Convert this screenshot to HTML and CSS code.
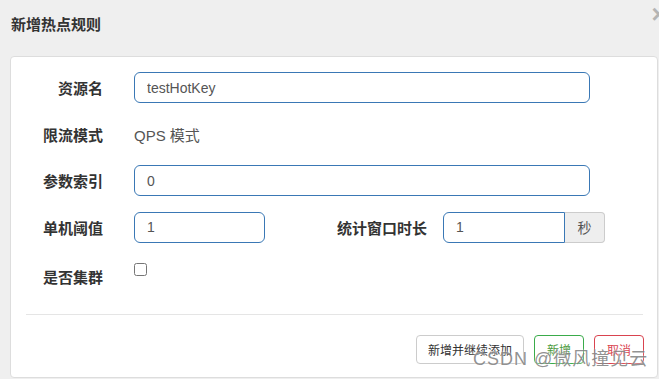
FILE: index.html
```html
<!doctype html>
<html lang="zh-CN">
<head>
  <meta charset="UTF-8">
  <title>新增热点规则</title>
  <link rel="stylesheet" href="styles.css">
</head>
<body>
  <div class="dialog">
    <div class="dialog-header">
      <h4>新增热点规则</h4>
      <span class="close">&times;</span>
    </div>
    <div class="panel">
      <form class="form">
        <div class="row">
          <label class="label">资源名</label>
          <input class="control wide" type="text" value="testHotKey">
        </div>
        <div class="row">
          <label class="label">限流模式</label>
          <span class="static">QPS 模式</span>
        </div>
        <div class="row">
          <label class="label">参数索引</label>
          <input class="control wide" type="text" value="0">
        </div>
        <div class="row">
          <label class="label">单机阈值</label>
          <input class="control short" type="text" value="1">
          <label class="label label-wide">统计窗口时长</label>
          <div class="group">
            <input class="control group-input" type="text" value="1">
            <span class="addon">秒</span>
          </div>
        </div>
        <div class="row row-check">
          <label class="label">是否集群</label>
          <input class="check" type="checkbox">
        </div>
      </form>
      <hr class="divider">
      <div class="actions">
        <button class="btn" type="button">新增并继续添加</button>
        <button class="btn btn-ok" type="button">新增</button>
        <button class="btn btn-cancel" type="button">取消</button>
      </div>
      <div class="watermark">CSDN @微风撞见云</div>
    </div>
  </div>
</body>
</html>
```

FILE: styles.css
```css
body {
  margin: 0;
  padding: 0;
  background-color: #efefef;
  font-family: "Liberation Sans", "Noto Sans CJK SC", sans-serif;
  color: #333;
  overflow: hidden;
}

.dialog {
  width: 659px;
  height: 379px;
}

.dialog-header {
  display: flex;
  justify-content: space-between;
  align-items: flex-start;
  height: 56px;
  padding-left: 11px;
}

.dialog-header h4 {
  margin: 0;
  padding-top: 14px;
  font-size: 15px;
  line-height: 21px;
  font-weight: bold;
  color: #333;
}

.close {
  margin-top: 3px;
  margin-right: -7px;
  font-size: 25px;
  line-height: 22px;
  font-weight: bold;
  color: #b4b4b4;
}

.panel {
  position: relative;
  margin: 0 1px 0 10px;
  padding: 15px 14px 13px 15px;
  height: 322px;
  box-sizing: border-box;
  background-color: #fff;
  border: 1px solid #ddd;
  border-radius: 4px;
}

.form {
  display: flex;
  flex-direction: column;
  gap: 15.5px;
}

.row {
  display: flex;
  align-items: center;
  height: 31px;
}

.label {
  width: 77px;
  margin-right: 31px;
  flex-shrink: 0;
  padding-top: 3px;
  text-align: right;
  font-size: 15px;
  line-height: 20px;
  font-weight: bold;
  color: #333;
}

.label-wide {
  width: 162px;
  margin-right: 16px;
}

.static {
  padding-top: 3px;
  font-size: 15px;
  line-height: 20px;
  color: #555;
}

.control {
  height: 31px;
  box-sizing: border-box;
  padding: 0 12px;
  border: 1px solid #3a78b5;
  border-radius: 6px;
  font-family: "Liberation Sans", "Noto Sans CJK SC", sans-serif;
  font-size: 14px;
  color: #555;
  background: #fff;
  outline: none;
}

.wide {
  width: 456px;
}

.short {
  width: 131px;
}

.group {
  display: flex;
  height: 31px;
}

.group-input {
  width: 122px;
  border-radius: 6px 0 0 6px;
}

.addon {
  width: 40px;
  box-sizing: border-box;
  display: flex;
  align-items: center;
  justify-content: center;
  background-color: #eee;
  border: 1px solid #ccc;
  border-left: none;
  border-radius: 0 4px 4px 0;
  font-size: 14px;
  color: #555;
}

.row-check {
  align-items: flex-start;
}

.row-check .label {
  padding-top: 10px;
}

.check {
  margin: 5px 0 0 0;
  width: 13px;
  height: 13px;
}

.divider {
  margin: 25px 0 0 0;
  width: 617px;
  border: none;
  border-top: 1px solid #e5e5e5;
}

.actions {
  display: flex;
  justify-content: flex-end;
  gap: 10px;
  margin-top: 20px;
  width: 618px;
}

.btn {
  height: 29px;
  padding: 0 11px;
  background: #fff;
  border: 1px solid #ccc;
  border-radius: 4px;
  font-family: "Liberation Sans", "Noto Sans CJK SC", sans-serif;
  font-size: 12px;
  color: #333;
}

.btn-ok {
  width: 50px;
  border-color: #3aab4a;
  color: #4a9a3c;
}

.btn-cancel {
  width: 50px;
  border-color: #d9434f;
  color: #d9434f;
}

.watermark {
  position: absolute;
  left: 462px;
  top: 291px;
  font-size: 18px;
  line-height: 22px;
  letter-spacing: 1px;
  color: rgba(110, 110, 110, 0.75);
  text-shadow: 0 0 2px #fff;
  white-space: nowrap;
}
```
